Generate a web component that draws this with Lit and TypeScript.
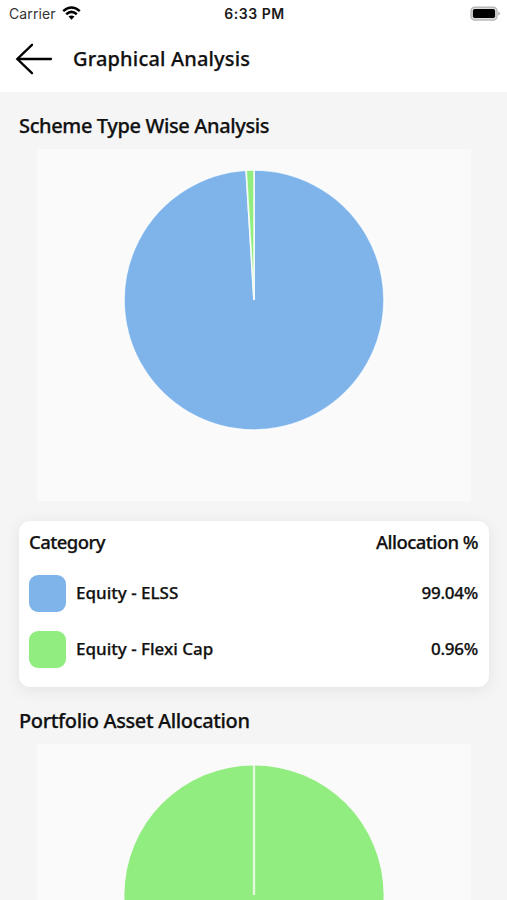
import { LitElement, html, svg, css } from "lit";
import { customElement, property } from "lit/decorators.js";

interface Slice { label: string; value: number; color: string; }

const BLUE = "#7eb4ea";
const GREEN = "#92ed80";

@customElement("status-bar")
class StatusBar extends LitElement {
  static styles = css`
    :host { display: grid; grid-template-columns: 1fr auto 1fr; align-items: center; height: 28px; box-sizing: border-box; padding: 0 7px 0 9px; font-family: Inter, sans-serif; font-size: 14px; line-height: 28px; color: #111; }
    .left { display: flex; align-items: center; gap: 6px; }
    .carrier { color: #333; letter-spacing: 0.1px; }
    .time { font-weight: 600; letter-spacing: 0.55px; color: #1a1a1a; }
    .right { display: flex; justify-content: flex-end; }
    svg { display: block; }
    .wifi { position: relative; top: -1px; }
    .battery { position: relative; top: -1px; }
  `;
  render() {
    return html`
      <div class="left">
        <span class="carrier">Carrier</span>
        <svg class="wifi" width="19" height="14" viewBox="0 0 19 14">
          <g fill="none" stroke="#000" stroke-width="2.5">
            <path d="M1.2 5.1Q9.5 -2.2 17.8 5.1" />
            <path d="M4.2 8.2Q9.5 3.6 14.8 8.2" />
          </g>
          <path d="M6.5 10.6Q9.5 8.2 12.5 10.6L9.5 13.7Z" />
        </svg>
      </div>
      <span class="time">6:33 PM</span>
      <div class="right">
        <svg class="battery" width="31" height="15" viewBox="0 0 31 15">
          <rect x="2" y="1.2" width="26" height="12.8" rx="3.8" fill="#ddd" stroke="#b8b8b8" stroke-width="1.4" />
          <rect x="3.9" y="3.1" width="22.2" height="9" rx="1.8" />
          <path d="M29.3 5.4Q31 6 31 7.5T29.3 9.6Z" fill="#aaa" />
        </svg>
      </div>`;
  }
}

@customElement("pie-chart")
class PieChart extends LitElement {
  @property({ attribute: false }) slices: Slice[] = [];
  static styles = css`
    :host { display: block; width: 434px; height: 352px; background: #fafafa; }
    svg { display: block; }
  `;
  render() {
    const cx = 217, cy = 151, r = 130;
    const total = this.slices.reduce((s, x) => s + x.value, 0);
    let acc = 0;
    const point = (t: number) => {
      const a = (t / total) * Math.PI * 2;
      return `${cx + r * Math.sin(a)} ${cy - r * Math.cos(a)}`;
    };
    return html`<svg width="434" height="352" viewBox="0 0 434 352">
      ${this.slices.map((s) => {
        if (s.value === total) {
          return svg`<circle cx=${cx} cy=${cy} r=${r - 0.4} fill=${s.color} />
            <path d="M${cx} ${cy}V${cy - r}" stroke="#fff" stroke-opacity="0.72" stroke-width="2.4" />`;
        }
        const from = point(acc);
        acc += s.value;
        return svg`<path d="M${cx} ${cy}L${from}A${r} ${r} 0 ${s.value / total > 0.5 ? 1 : 0} 1 ${point(acc)}Z"
          fill=${s.color} stroke="#fff" stroke-opacity="0.8" stroke-width="1.7" stroke-linejoin="bevel" />`;
      })}
    </svg>`;
  }
}

@customElement("allocation-card")
class AllocationCard extends LitElement {
  @property({ attribute: false }) slices: Slice[] = [];
  static styles = css`
    :host { display: block; box-sizing: border-box; width: 470px; height: 166px; padding: 6px 11px 0 10px; background: #fff; border-radius: 11px; box-shadow: 0 3px 16px rgba(0, 0, 0, 0.08); color: #111; }
    .row { display: flex; align-items: center; height: 37px; margin-bottom: 19px; font-size: 17px; font-weight: 500; }
    .head { height: 28px; margin-bottom: 20px; font-size: 18.5px; letter-spacing: -0.55px; justify-content: space-between; }
    .swatch { width: 37px; height: 37px; border-radius: 9px; margin-right: 10px; }
    .name { flex: 1; }
    .value { letter-spacing: -0.25px; }
    .text { position: relative; top: -1px; }
  `;
  render() {
    return html`
      <div class="row head"><span>Category</span><span>Allocation %</span></div>
      ${this.slices.map((s) => html`
        <div class="row">
          <span class="swatch" style="background:${s.color}"></span>
          <span class="name text">${s.label}</span>
          <span class="value text">${s.value.toFixed(2)}%</span>
        </div>`)}`;
  }
}

@customElement("app-root")
class AppRoot extends LitElement {
  static styles = css`
    :host { display: block; height: 900px; overflow: hidden; background: #f5f5f5; font-family: "Noto Sans", sans-serif; color: #111; }
    .top { height: 92px; background: #fff; }
    .nav { display: flex; align-items: center; height: 62px; padding-left: 15px; gap: 20px; }
    h1, h2, allocation-card { -webkit-text-stroke: 0.25px #111; }
    h1, h2 { margin: 0; font-size: 20px; font-weight: 500; line-height: 28px; white-space: nowrap; }
    h1 { letter-spacing: 0.17px; }
    h2 { letter-spacing: -0.37px; }
    main { display: flex; flex-direction: column; padding: 20px 18px 0 19px; }
    pie-chart { margin: 9px 0 20px 18px; flex: none; }
    allocation-card { flex: none; margin-bottom: 20px; }
  `;
  render() {
    const scheme: Slice[] = [
      { label: "Equity - ELSS", value: 99.04, color: BLUE },
      { label: "Equity - Flexi Cap", value: 0.96, color: GREEN },
    ];
    return html`
      <div class="top">
        <status-bar></status-bar>
        <div class="nav">
          <svg width="38" height="32" viewBox="0 0 38 32" fill="none" stroke="#000" stroke-width="2.3" stroke-linecap="round">
            <path d="M36 16H2.5M17 1.8L2.3 16L17 30.2" />
          </svg>
          <h1>Graphical Analysis</h1>
        </div>
      </div>
      <main>
        <h2>Scheme Type Wise Analysis</h2>
        <pie-chart .slices=${scheme}></pie-chart>
        <allocation-card .slices=${scheme}></allocation-card>
        <h2>Portfolio Asset Allocation</h2>
        <pie-chart .slices=${[{ label: "Equity", value: 100, color: GREEN }]}></pie-chart>
      </main>`;
  }
}
